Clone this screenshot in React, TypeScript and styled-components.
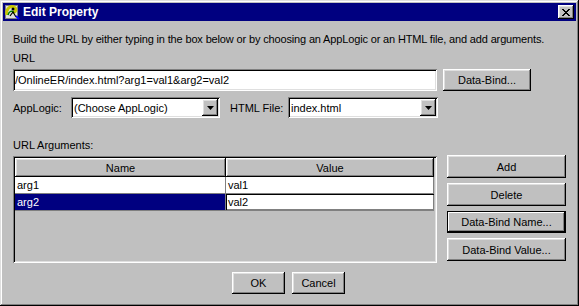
import React from 'react';
import styled, { createGlobalStyle, css } from 'styled-components';

const GlobalStyle = createGlobalStyle`
  html, body {
    margin: 0;
    padding: 0;
    background: #c0c0c0;
  }
  * {
    box-sizing: border-box;
  }
`;

const raised = css`
  box-shadow: inset -1px -1px 0 #000000, inset 1px 1px 0 #ffffff,
    inset -2px -2px 0 #808080, inset 2px 2px 0 #dfdfdf;
`;

const sunken = css`
  box-shadow: inset 1px 1px 0 #808080, inset -1px -1px 0 #ffffff,
    inset 2px 2px 0 #000000, inset -2px -2px 0 #dfdfdf;
`;

const Window = styled.div`
  width: 579px;
  height: 306px;
  background: #c0c0c0;
  padding: 3px;
  display: flex;
  flex-direction: column;
  font-family: 'Liberation Sans', Arial, sans-serif;
  font-size: 11px;
  color: #000;
  box-shadow: inset -1px -1px 0 #000000, inset 1px 1px 0 #dfdfdf,
    inset -2px -2px 0 #808080, inset 2px 2px 0 #ffffff;
`;

const TitleBar = styled.div`
  height: 18px;
  background: #000080;
  display: flex;
  align-items: center;
  padding: 0 2px 0 1px;
  gap: 3px;
`;

const Title = styled.span`
  flex: 1;
  color: #fff;
  font-weight: bold;
  font-size: 12px;
`;

const CloseButton = styled.div`
  width: 16px;
  height: 14px;
  background: #c0c0c0;
  ${raised};
  display: flex;
  align-items: center;
  justify-content: center;
`;

const Body = styled.div`
  flex: 1;
  display: flex;
  flex-direction: column;
  padding: 12px 10px 0 10px;
`;

const Text = styled.div<{ $mt?: number; $tight?: boolean }>`
  line-height: 13px;
  margin-top: ${p => p.$mt ?? 0}px;
  white-space: nowrap;
  letter-spacing: ${p => (p.$tight ? '-0.15px' : 'normal')};
`;

const Row = styled.div<{ $mt?: number }>`
  display: flex;
  align-items: center;
  margin-top: ${p => p.$mt ?? 0}px;
`;

const TextBox = styled.div<{ $w: number }>`
  width: ${p => p.$w}px;
  height: 22px;
  background: #fff;
  ${sunken};
  padding: 0 2px;
  display: flex;
  align-items: center;
  white-space: nowrap;
  overflow: hidden;
`;

const Button = styled.div<{ $w: number; $h?: number; $default?: boolean }>`
  width: ${p => p.$w}px;
  height: ${p => p.$h ?? 22}px;
  display: flex;
  align-items: center;
  justify-content: center;
  background: #c0c0c0;
  ${raised};
  ${p =>
    p.$default &&
    css`
      box-shadow: inset 0 0 0 1px #000000, inset -2px -2px 0 #000000,
        inset 2px 2px 0 #ffffff, inset -3px -3px 0 #808080;
    `}
`;

const Label = styled.span<{ $w: number }>`
  width: ${p => p.$w}px;
`;

const Select = styled.div<{ $w: number }>`
  width: ${p => p.$w}px;
  height: 21px;
  background: #fff;
  ${sunken};
  display: flex;
  align-items: center;
  padding: 2px 2px 2px 3px;
`;

const SelectValue = styled.span`
  flex: 1;
  white-space: nowrap;
`;

const ArrowButton = styled.div`
  width: 16px;
  height: 17px;
  background: #c0c0c0;
  ${raised};
  display: flex;
  align-items: center;
  justify-content: center;
`;

const ArgsArea = styled.div`
  display: flex;
  gap: 10px;
  margin-top: 4px;
`;

const Table = styled.div`
  width: 427px;
  height: 107px;
  background: #c0c0c0;
  ${sunken};
  padding: 2px;
  position: relative;
`;

const FocusRing = styled.div`
  position: absolute;
  inset: 1px 1px auto 1px;
  height: calc(100% - 2px);
  border-left: 1px dotted #000;
  border-top: 1px dotted #000;
  pointer-events: none;
`;

const Grid = styled.div`
  display: grid;
  grid-template-columns: 211px 208px;
`;

const HeaderCell = styled.div`
  height: 19px;
  ${raised};
  display: flex;
  align-items: center;
  justify-content: center;
`;

const Cell = styled.div<{ $selected?: boolean }>`
  height: 17px;
  padding: 0 2px;
  display: flex;
  align-items: center;
  background: ${p => (p.$selected ? '#000080' : '#fff')};
  color: ${p => (p.$selected ? '#fff' : '#000')};
  border-right: 1px solid #808080;
  border-bottom: 1px solid #808080;
`;

const EditCell = styled.div`
  height: 17px;
  background: #fff;
  border-bottom: 1px solid #808080;
  box-shadow: inset 1px 1px 0 #000, inset -1px -1px 0 #808080;
  padding: 0 2px;
  display: flex;
  align-items: center;
`;

const SideButtons = styled.div`
  display: flex;
  flex-direction: column;
  gap: 5px;
  margin-top: -1px;
`;

const Footer = styled.div`
  display: flex;
  justify-content: center;
  gap: 7px;
  margin-top: 9px;
  padding-right: 2px;
`;

const AppIcon = () => (
  <svg width="16" height="16" viewBox="0 0 16 16">
    <rect x="1.5" y="1.5" width="12" height="13" fill="#e0e0e0" stroke="#808080" />
    <path d="M3 11 C1.5 5 6 1.5 10 3 C13 4.5 12 8.5 8.5 8" fill="none" stroke="#c8c800" strokeWidth="3" />
    <path d="M4 11 C5 7 8 6 10 9" fill="none" stroke="#008000" strokeWidth="1.5" />
    <circle cx="9" cy="5" r="1.5" fill="#000" />
    <path d="M6 12 L9 8 L12 13" fill="none" stroke="#000" strokeWidth="1.2" />
    <path d="M12 12 L15 15" stroke="#0000ff" strokeWidth="2" />
  </svg>
);

const CloseGlyph = () => (
  <svg width="8" height="7" viewBox="0 0 8 7">
    <path d="M0 0 L7 7 M1 0 L8 7 M7 0 L0 7 M8 0 L1 7" stroke="#000" strokeWidth="1" />
  </svg>
);

const DownArrow = () => (
  <svg width="7" height="4" viewBox="0 0 7 4">
    <path d="M0 0 H7 L3.5 4 Z" fill="#000" />
  </svg>
);

const App: React.FC = () => {
  return (
    <>
      <GlobalStyle />
      <Window>
        <TitleBar>
          <AppIcon />
          <Title>Edit Property</Title>
          <CloseButton><CloseGlyph /></CloseButton>
        </TitleBar>
        <Body>
          <Text $tight>
            Build the URL by either typing in the box below or by choosing an AppLogic or an HTML file, and add arguments.
          </Text>
          <Text $mt={6}>URL</Text>
          <Row $mt={4}>
            <TextBox $w={424}>/OnlineER/index.html?arg1=val1&amp;arg2=val2</TextBox>
            <Button $w={88} style={{ marginLeft: 6 }}>Data-Bind...</Button>
          </Row>
          <Row $mt={6}>
            <Label $w={58}>AppLogic:</Label>
            <Select $w={149}>
              <SelectValue>(Choose AppLogic)</SelectValue>
              <ArrowButton><DownArrow /></ArrowButton>
            </Select>
            <Label $w={58} style={{ marginLeft: 10 }}>HTML File:</Label>
            <Select $w={150}>
              <SelectValue>index.html</SelectValue>
              <ArrowButton><DownArrow /></ArrowButton>
            </Select>
          </Row>
          <Text $mt={21}>URL Arguments:</Text>
          <ArgsArea>
            <Table>
              <FocusRing />
              <Grid>
                <HeaderCell>Name</HeaderCell>
                <HeaderCell>Value</HeaderCell>
                <Cell>arg1</Cell>
                <Cell>val1</Cell>
                <Cell $selected>arg2</Cell>
                <EditCell>val2</EditCell>
              </Grid>
            </Table>
            <SideButtons>
              <Button $w={119} $h={23}>Add</Button>
              <Button $w={119} $h={23}>Delete</Button>
              <Button $w={119} $h={22} $default>Data-Bind Name...</Button>
              <Button $w={119} $h={23}>Data-Bind Value...</Button>
            </SideButtons>
          </ArgsArea>
          <Footer>
            <Button $w={53}>OK</Button>
            <Button $w={53}>Cancel</Button>
          </Footer>
        </Body>
      </Window>
    </>
  );
};

export default App;
